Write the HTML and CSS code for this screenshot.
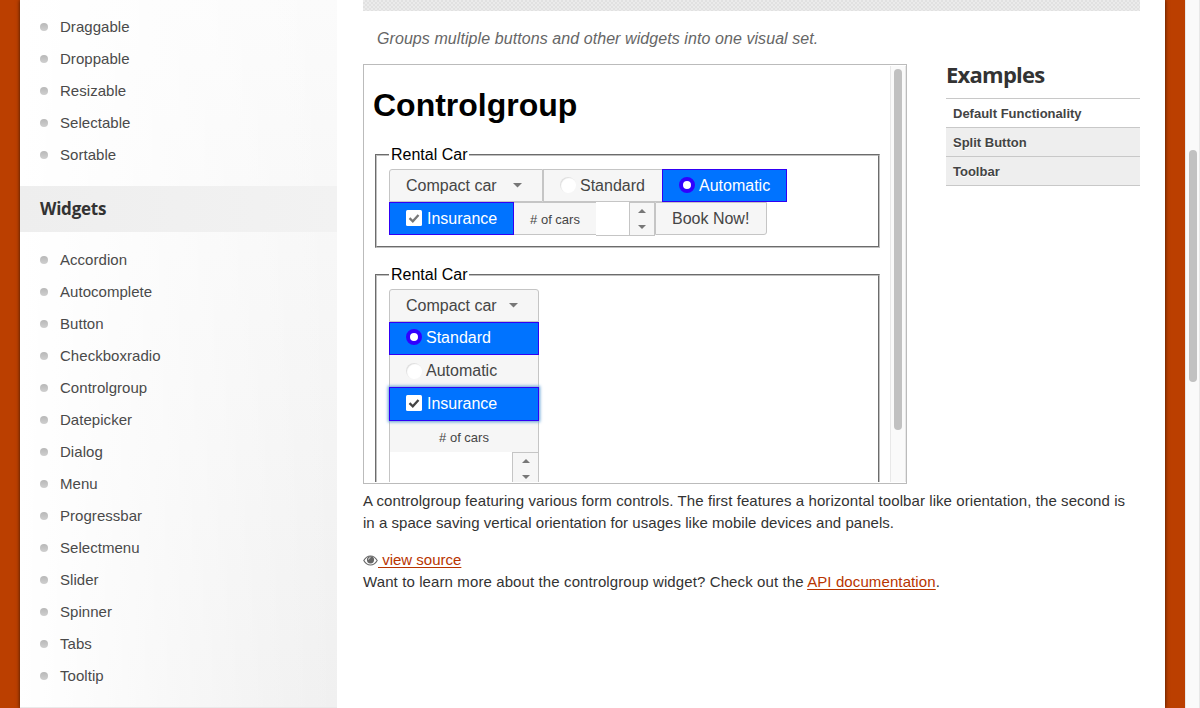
FILE: index.html
```
<!DOCTYPE html>
<html lang="en">
<head>
<meta charset="utf-8">
<title>Controlgroup | jQuery UI</title>
<link rel="stylesheet" href="styles.css">
</head>
<body>
<div class="stage">
  <div class="page">
    <aside class="sidebar">
      <ul class="links links-first">
        <li><span>Draggable</span></li>
        <li><span>Droppable</span></li>
        <li><span>Resizable</span></li>
        <li><span>Selectable</span></li>
        <li><span>Sortable</span></li>
      </ul>
      <h3 class="side-title"><span>Widgets</span></h3>
      <ul class="links links-second">
        <li><span>Accordion</span></li>
        <li><span>Autocomplete</span></li>
        <li><span>Button</span></li>
        <li><span>Checkboxradio</span></li>
        <li><span>Controlgroup</span></li>
        <li><span>Datepicker</span></li>
        <li><span>Dialog</span></li>
        <li><span>Menu</span></li>
        <li><span>Progressbar</span></li>
        <li><span>Selectmenu</span></li>
        <li><span>Slider</span></li>
        <li><span>Spinner</span></li>
        <li><span>Tabs</span></li>
        <li><span>Tooltip</span></li>
      </ul>
      <div class="side-end"></div>
    </aside>
    <main class="content">
      <div class="hatch"></div>
      <p class="desc"><span>Groups multiple buttons and other widgets into one visual set.</span></p>
      <div class="columns">
        <div class="frame">
          <div class="demo">
            <h1 class="demo-title"><span>Controlgroup</span></h1>
            <fieldset class="group">
              <legend>Rental Car</legend>
              <div class="row row-top">
                <div class="btn select w-select"><span>Compact car</span><svg class="caret" viewBox="0 0 9 5"><path d="M0 0h9L4.500 4.500z"/></svg></div>
                <div class="btn w-standard"><i class="radio"></i><span>Standard</span></div>
                <div class="btn active w-auto"><i class="radio on"></i><span>Automatic</span></div>
              </div>
              <div class="row row-bottom">
                <div class="btn active w-insurance"><svg class="check" viewBox="0 0 16 16"><rect width="16" height="16" rx="1.500" fill="#fff"/><path d="M3.500 8.200 6.800 11.300 12.500 5" fill="none" stroke="#777" stroke-width="2.300"/></svg><span>Insurance</span></div>
                <div class="label"><span># of cars</span></div>
                <div class="input"></div>
                <div class="spin"><svg class="arrow" viewBox="0 0 8 4"><path d="M0 4h8L4 0z"/></svg><svg class="arrow" viewBox="0 0 8 4"><path d="M0 0h8L4 4z"/></svg></div>
                <div class="btn w-book"><span>Book Now!</span></div>
              </div>
            </fieldset>
            <fieldset class="group group-vertical">
              <legend>Rental Car</legend>
              <div class="stack">
                <div class="btn select"><span>Compact car</span><svg class="caret" viewBox="0 0 9 5"><path d="M0 0h9L4.500 4.500z"/></svg></div>
                <div class="btn active first-choice"><i class="radio on"></i><span>Standard</span></div>
                <div class="btn plain"><i class="radio"></i><span>Automatic</span></div>
                <div class="btn active focus"><svg class="check" viewBox="0 0 16 16"><rect width="16" height="16" rx="1.500" fill="#fff"/><path d="M3.500 8.200 6.800 11.300 12.500 5" fill="none" stroke="#444" stroke-width="2.300"/></svg><span>Insurance</span></div>
                <div class="label"><span># of cars</span></div>
                <div class="spinner"><div class="spin"><svg class="arrow" viewBox="0 0 8 4"><path d="M0 4h8L4 0z"/></svg><svg class="arrow" viewBox="0 0 8 4"><path d="M0 0h8L4 4z"/></svg></div></div>
              </div>
            </fieldset>
          </div>
          <div class="track"><div class="thumb"></div></div>
        </div>
        <nav class="examples">
          <h2 class="ex-title"><span>Examples</span></h2>
          <ul class="ex-list">
            <li class="current"><span>Default Functionality</span></li>
            <li><span>Split Button</span></li>
            <li><span>Toolbar</span></li>
          </ul>
        </nav>
      </div>
      <p class="text"><span class="l1">A controlgroup featuring various form controls. The first features a horizontal toolbar like orientation, the second is</span><br><span class="l2">in a space saving vertical orientation for usages like mobile devices and panels.</span></p>
      <p class="text more"><a class="source"><svg class="eye" viewBox="0 0 15 14"><path d="M.8 7.500C2.500 4.500 4.800 3 7.500 3s5 1.500 6.700 4.500C12.500 10.500 10.200 12 7.500 12S2.500 10.500.8 7.500Z" fill="none" stroke="#666" stroke-width="1.100"/><circle cx="7.500" cy="6.800" r="3.600" fill="#666"/><path d="M5.500 6.600a2 2 0 0 1 2-2" fill="none" stroke="#fff" stroke-width=".8"/></svg> view source</a><br><span class="l3">Want to learn more about the controlgroup widget? Check out the <a>API documentation</a>.</span></p>
    </main>
  </div>
</div>
<div class="window-track"><div class="window-thumb"></div></div>
</body>
</html>
```
FILE: styles.css
```
* { box-sizing: border-box; }
body { margin: 0; width: 1200px; height: 708px; overflow: hidden; display: flex; font-family: "Liberation Sans", Arial, sans-serif; font-size: 15px; color: #333; background: #fff; }
ul, p, h1, h2, h3 { margin: 0; padding: 0; list-style: none; }
.stage { width: 1185px; height: 708px; padding: 0 20px; background: #bb3f00; overflow: hidden; }
.page { display: flex; width: 1145px; height: 708px; background: #fff; box-shadow: 0 0 4px rgba(0,0,0,.7); }
.sidebar { width: 317px; height: 708px; background: linear-gradient(to right, #fff, rgba(255,255,255,0)), linear-gradient(to bottom, #fbfbfb, #f8f8f8 26%, #f0f0f0); }
.links li { display: flex; align-items: center; height: 32px; padding-left: 20px; gap: 12px; color: #4a4a4a; letter-spacing: .04px; text-shadow: 0 1px 0 #fff; }
.links li span { padding-bottom: 2px; }
.links li::before { content: ""; width: 8px; height: 8px; border-radius: 50%; background: linear-gradient(#b8b8b8, #cfcfcf); }
.links-first { height: 186px; padding-top: 11px; }
.side-title { height: 46px; padding-left: 20px; font: 700 17px/45px "Open Sans", sans-serif; letter-spacing: -.25px; background: linear-gradient(to right, #eee, #f2f2f2); }
.links-second { height: 475px; padding-top: 12px; }
.side-end { height: 1px; background: #eaeaea; }
.content { width: 828px; padding: 0 25px 0 26px; }
.hatch { height: 11px; background: conic-gradient(#e1e1e1 25%, #ebebeb 0 50%, #e1e1e1 0 75%, #ebebeb 0) 0 0 / 4px 4px; }
.desc { height: 53px; padding: 17px 0 0 14px; font-size: 16px; line-height: 21px; font-style: italic; color: #666; letter-spacing: .075px; }
.columns { display: flex; justify-content: space-between; height: 420px; }
.frame { display: flex; justify-content: space-between; width: 544px; height: 420px; padding: 1px 0; border: 1px solid #bbb; }
.demo { width: 526px; height: 416px; padding: 0 8px 0 9px; overflow: hidden; color: #000; font-size: 16px; }
.demo-title { font-size: 32px; line-height: 38px; padding-top: 20px; height: 80px; }
.group { margin: 0 2px; border: 2px groove silver; padding: 5px 12px 10px; height: 102px; }
.group legend { padding: 0 2px; line-height: 18px; }
.group-vertical { margin-top: 18px; height: 260px; }
.row { display: flex; height: 33px; }
.btn { display: flex; align-items: center; height: 33px; padding-left: 16px; border: 1px solid #c5c5c5; background: #f6f6f6; color: #454545; }
.btn.active { background: #0073ff; border-color: #3000f5; color: #fff; }
.w-select { width: 154px; border-radius: 3px 0 0 0; }
.w-standard { width: 119px; border-right: 0; }
.w-auto { width: 125px; }
.w-insurance { width: 125px; }
.w-book { width: 112px; border-radius: 0 0 3px 0; }
.caret { width: 9px; height: 5px; fill: #777; }
.arrow { width: 8px; height: 4px; fill: #777; }
.select { justify-content: space-between; padding-right: 20px; }
.radio { width: 16px; height: 16px; margin: -1px 4px 0 0; border-radius: 50%; background: #fff; box-shadow: inset 1px 1px 1px #ddd; }
.radio.on { border: 4px solid #3000ff; box-shadow: none; }
.check { width: 16px; height: 16px; margin: -2px 5px 0 0; }
.label { width: 82px; height: 33px; border-bottom: 1px solid #c5c5c5; border-top: 1px solid #c5c5c5; background: #f6f6f6; color: #454545; font-size: 13px; line-height: 33px; text-align: center; }
.input { width: 33px; height: 34px; background: #fff; border-bottom: 1px solid #c5c5c5; }
.spin { display: flex; flex-direction: column; align-items: center; justify-content: space-between; width: 26px; height: 34px; padding: 6px 0; background: #f6f6f6; border: 1px solid #c5c5c5; }
.stack { width: 150px; height: 230px; }
.stack .select { border-radius: 3px 3px 0 0; }
.stack .first-choice { padding-bottom: 2px; }
.stack .plain { height: 32px; border-top: 0; border-bottom: 0; }
.stack .focus { position: relative; height: 34px; box-shadow: 0 0 3px 1px #5e9ed6; }
.stack .label { width: 150px; height: 31px; border: solid #c5c5c5; border-width: 0 1px; }
.spinner { display: flex; justify-content: flex-end; border-left: 1px solid #c5c5c5; height: 34px; }
.spinner .spin { width: 27px; }
.track { display: flex; justify-content: center; width: 16px; height: 416px; padding-top: 3px; background: #fafafa; border: solid #e8e8e8; border-width: 0 1px; }
.thumb { width: 8px; height: 361px; border-radius: 4px; background: #c1c1c1; }
.examples { width: 194px; }
.ex-title { height: 34px; font: 700 22px/20px "Open Sans", sans-serif; letter-spacing: -.75px; }
.ex-list { border-top: 1px solid #c8c8c8; }
.ex-list li { height: 29px; padding-left: 7px; border-bottom: 1px solid #c8c8c8; background: #eee; color: #444; font-size: 13px; font-weight: 700; line-height: 29px; text-shadow: 0 1px 0 #fff; }
.ex-list .current { background: #fff; }
.text { height: 65px; padding-top: 6px; line-height: 22px; white-space: nowrap; }
.text a { color: #b83400; text-decoration: underline; text-underline-offset: 2px; }
.l1 { letter-spacing: .08px; }
.l2 { letter-spacing: .04px; }
.l3 { letter-spacing: .108px; }
.more { padding-top: 0; }
.eye { width: 15px; height: 14px; vertical-align: -2px; }
.window-track { display: flex; justify-content: center; width: 15px; height: 708px; padding-top: 150px; background: #fafafa; border: solid #e8e8e8; border-width: 0 1px; }
.window-thumb { width: 8px; height: 232px; border-radius: 4px; background: #c1c1c1; }
```
